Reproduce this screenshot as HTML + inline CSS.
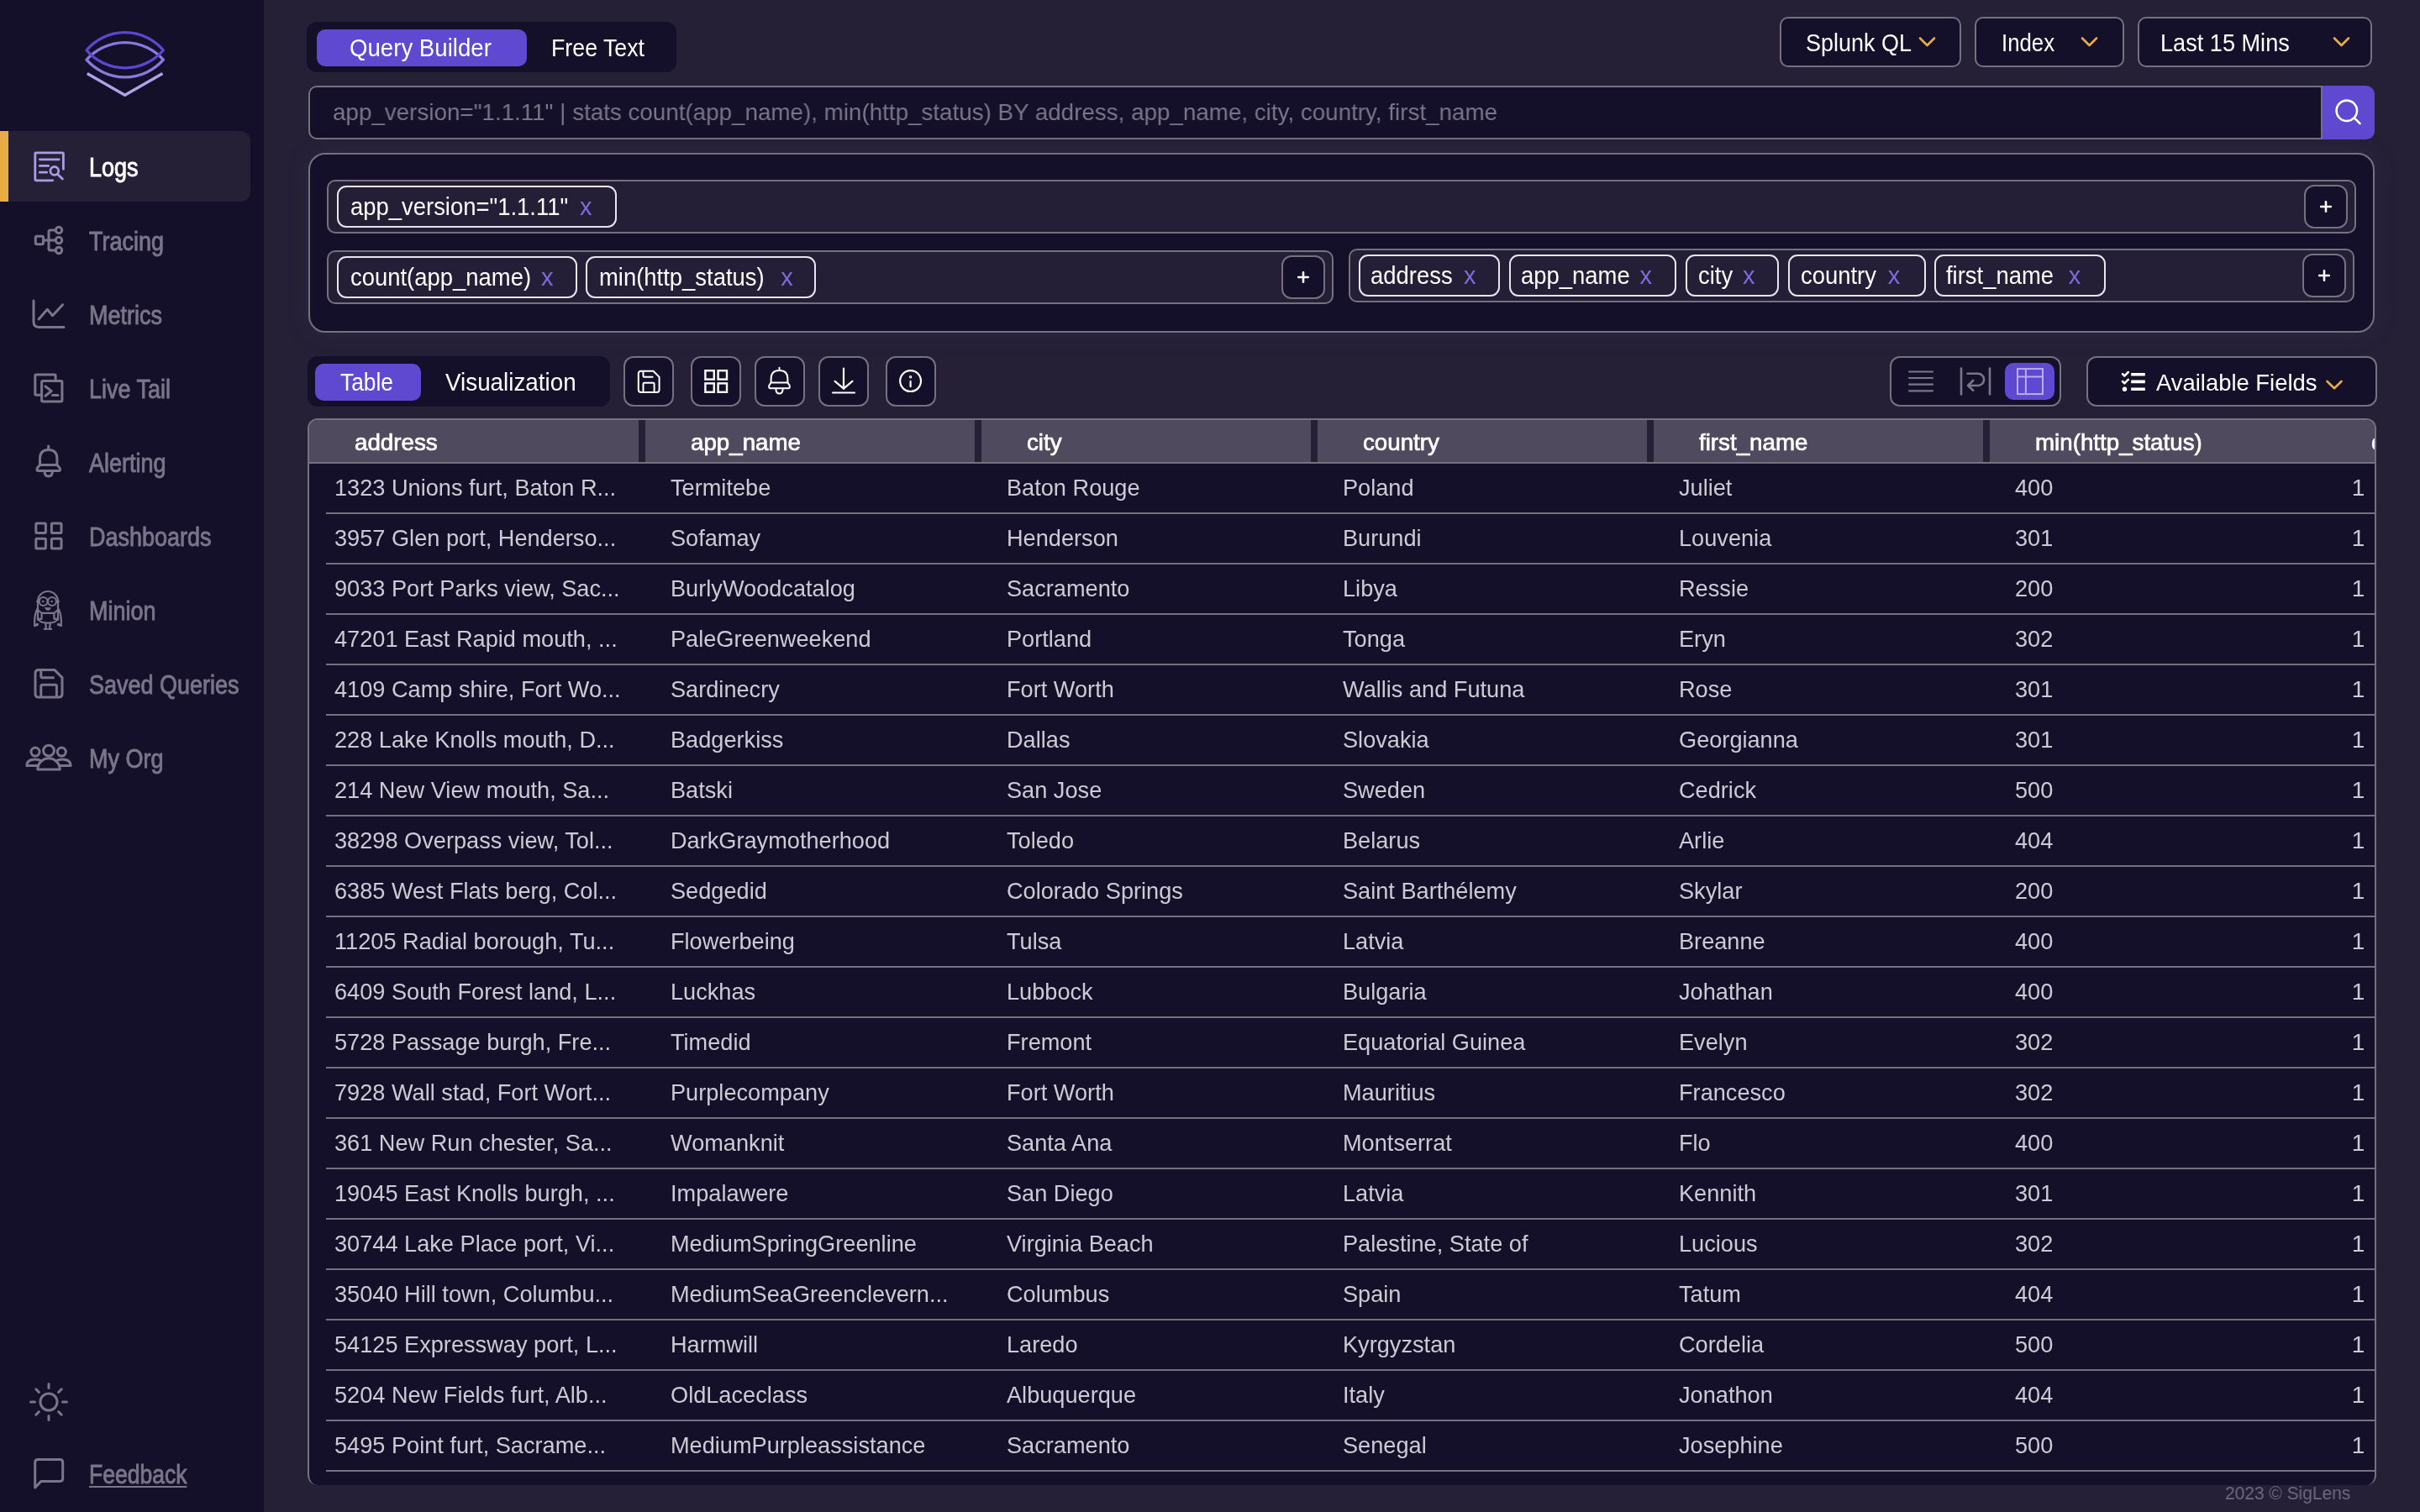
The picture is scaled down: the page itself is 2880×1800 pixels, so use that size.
<!DOCTYPE html>
<html><head><meta charset="utf-8"><style>
html,body{margin:0;padding:0;}
body{width:2880px;height:1800px;overflow:hidden;background:#252036;position:relative;font-family:"Liberation Sans",sans-serif;}
#w{position:absolute;left:0;top:0;width:2880px;height:1800px;will-change:transform;}
@media (max-width:2000px){body{width:1440px;height:900px;} #w{zoom:0.5;}}
.a{position:absolute;}
.t{position:absolute;white-space:nowrap;transform-origin:0 0;}
svg.a{overflow:visible;}
</style></head><body><div id="w">
<div class="a" style="left:0px;top:0px;width:314px;height:1800px;background:#15102a;"></div>
<svg class="a" style="left:90px;top:25px;width:120px;height:100px;" width="120" height="100" viewBox="90 25 120 100" stroke="#5d47d0" stroke-width="3.3" fill="none" stroke-linecap="round" stroke-linejoin="round"><path d="M103 71.2 A61 61 0 0 1 194.4 71.2 A61 61 0 0 1 103 71.2 Z" stroke="#8b78de"/><path d="M103 59.7 A60 60 0 0 1 194.4 59.7 A60 60 0 0 1 103 59.7 Z" stroke="#5d47d0"/><path d="M103.8 87.5 L148.6 113.3 L193.5 87.5" stroke="#b0a2e6" stroke-linecap="butt"/></svg>
<div class="a" style="left:0px;top:156px;width:298px;height:84px;background:#252036;border-radius:0 12px 12px 0;"></div>
<div class="a" style="left:0px;top:156px;width:10px;height:84px;background:#e9ab45;"></div>
<div class="t nav" style="left:105.9px;top:184.0px;font-size:31px;line-height:31px;color:#ffffff;transform:scaleX(0.8700);-webkit-text-stroke:0.9px #ffffff;">Logs</div>
<div class="t nav" style="left:105.9px;top:272.0px;font-size:31px;line-height:31px;color:#7a7589;transform:scaleX(0.8700);-webkit-text-stroke:0.9px #7a7589;">Tracing</div>
<div class="t nav" style="left:105.9px;top:360.0px;font-size:31px;line-height:31px;color:#7a7589;transform:scaleX(0.8700);-webkit-text-stroke:0.9px #7a7589;">Metrics</div>
<div class="t nav" style="left:105.9px;top:448.0px;font-size:31px;line-height:31px;color:#7a7589;transform:scaleX(0.8700);-webkit-text-stroke:0.9px #7a7589;">Live Tail</div>
<div class="t nav" style="left:105.9px;top:536.0px;font-size:31px;line-height:31px;color:#7a7589;transform:scaleX(0.8700);-webkit-text-stroke:0.9px #7a7589;">Alerting</div>
<div class="t nav" style="left:105.9px;top:624.0px;font-size:31px;line-height:31px;color:#7a7589;transform:scaleX(0.8700);-webkit-text-stroke:0.9px #7a7589;">Dashboards</div>
<div class="t nav" style="left:105.9px;top:712.0px;font-size:31px;line-height:31px;color:#7a7589;transform:scaleX(0.8700);-webkit-text-stroke:0.9px #7a7589;">Minion</div>
<div class="t nav" style="left:105.9px;top:800.0px;font-size:31px;line-height:31px;color:#7a7589;transform:scaleX(0.8700);-webkit-text-stroke:0.9px #7a7589;">Saved Queries</div>
<div class="t nav" style="left:105.9px;top:888.0px;font-size:31px;line-height:31px;color:#7a7589;transform:scaleX(0.8700);-webkit-text-stroke:0.9px #7a7589;">My Org</div>
<svg class="a" style="left:36px;top:176px;width:44px;height:44px;" width="44" height="44" viewBox="36 176 44 44" stroke="#a99ce2" stroke-width="2.8" fill="none" stroke-linecap="round" stroke-linejoin="round"><g transform="translate(0.8 0.8)"><path d="M61.9 214 H42 Q41 214 41 213 V182 Q41 181 42 181 H73.6 Q74.6 181 74.6 182 V200.5"/><path d="M46.5 189 H69.4 M46.5 196.6 H56.9 M46.5 204.4 H54.9"/><circle cx="64" cy="202.6" r="4.9"/><path d="M67.6 206.4 L73.6 212.2"/></g></svg>
<svg class="a" style="left:36px;top:264px;width:44px;height:44px;" width="44" height="44" viewBox="36 264 44 44" stroke="#7a7589" stroke-width="3" fill="none" stroke-linecap="round" stroke-linejoin="round"><rect x="42.3" y="281.2" width="9.2" height="9.6" rx="1.5"/><path d="M51.5 286 H58 M66.3 273.9 H60 Q58 273.9 58 275.9 V296 Q58 298 60 298 H66.3 M58 286 H66.3"/><circle cx="70" cy="273.9" r="3.7"/><circle cx="70" cy="286" r="3.7"/><circle cx="70" cy="298" r="3.7"/></svg>
<svg class="a" style="left:32px;top:350px;width:50px;height:46px;" width="50" height="46" viewBox="32 350 50 46" stroke="#7a7589" stroke-width="3" fill="none" stroke-linecap="round" stroke-linejoin="round"><path d="M40 358 V383 Q40 389.6 46.6 389.6 H76"/><path d="M46.1 379.9 L56.3 368.3 L62.6 375.7 L74.6 362.8"/></svg>
<svg class="a" style="left:36px;top:440px;width:44px;height:44px;" width="44" height="44" viewBox="36 440 44 44" stroke="#7a7589" stroke-width="3" fill="none" stroke-linecap="round" stroke-linejoin="round"><path d="M48.1 470.2 H43 Q41.8 470.2 41.8 469 V447.1 Q41.8 445.9 43 445.9 H64.9 Q66.1 445.9 66.1 447.1 V452"/><rect x="49.6" y="453.5" width="24.3" height="24.6" rx="1.5"/><path d="M54 460 L61.2 465.5 L54 471.2 M62.5 470.5 H69"/></svg>
<svg class="a" style="left:36px;top:526px;width:46px;height:46px;" width="46" height="46" viewBox="36 526 46 46" stroke="#7a7589" stroke-width="3" fill="none" stroke-linecap="round" stroke-linejoin="round"><path d="M57.7 531 V534.5 M47.5 553.5 V546 Q47.5 535.5 57.7 535.5 Q67.9 535.5 67.9 546 V553.5"/><path d="M47.5 553.5 L44.5 557 Q42.8 560.6 45.5 560.6 H70 Q72.6 560.6 71 557 L67.9 553.5 Z"/><path d="M53 561 Q53 567 57.7 567 Q62.4 567 62.4 561"/></svg>
<svg class="a" style="left:36px;top:616px;width:44px;height:44px;" width="44" height="44" viewBox="36 616 44 44" stroke="#7a7589" stroke-width="3" fill="none" stroke-linecap="round" stroke-linejoin="round"><rect x="42.8" y="622.9" width="11.6" height="11.6" rx="1"/><rect x="61.4" y="622.9" width="11.6" height="11.6" rx="1"/><rect x="42.8" y="641.3" width="11.6" height="11.6" rx="1"/><rect x="61.4" y="641.3" width="11.6" height="11.6" rx="1"/></svg>
<svg class="a" style="left:34px;top:698px;width:48px;height:56px;" width="48" height="56" viewBox="34 698 48 56" stroke="#7a7589" stroke-width="2.2" fill="none" stroke-linecap="round" stroke-linejoin="round"><path d="M45 738 V716 A12 12 0 0 1 69 716 V738"/><circle cx="51.6" cy="716" r="5"/><circle cx="62" cy="716" r="5"/><path d="M44 716 H46.6 M67 716 H70"/><path d="M53.6 723.6 H60.4 Q59.8 726.4 57 726.4 Q54.2 726.4 53.6 723.6 Z" fill="#7a7589" stroke-width="0.8"/><path d="M45.5 726.5 L49.6 729.8 H64.4 L68.5 726.5 M49.6 729.8 V736.8 H46.5 M64.4 729.8 V736.8 H67.5"/><path d="M45.2 736.5 Q47 741.6 57 741.6 Q67 741.6 68.8 736.5"/><path d="M44 725.5 Q40.6 733 41.2 744 M70 725.5 Q73.4 733 72.8 744"/><path d="M41.5 744.5 L44.5 743.5 M72.5 744.5 L69.5 743.5" stroke-width="3.2"/><path d="M54.2 742 L55 748.5 M59.8 742 L59 748.5 M52.8 748.8 H56 M58 748.8 H61.2"/><circle cx="51.2" cy="716" r="1.3" fill="#7a7589" stroke="none"/><circle cx="61.6" cy="716" r="1.3" fill="#7a7589" stroke="none"/></svg>
<svg class="a" style="left:36px;top:792px;width:44px;height:44px;" width="44" height="44" viewBox="36 792 44 44" stroke="#7a7589" stroke-width="3" fill="none" stroke-linecap="round" stroke-linejoin="round"><path d="M45 797.6 H65 L74 806.6 V826 Q74 830 70 830 H46 Q42 830 42 826 V801.6 Q42 797.6 46 797.6 Z"/><path d="M48.8 798 V805 Q48.8 806.8 50.6 806.8 H63.5 M48.8 829.5 V817 Q48.8 815.2 50.6 815.2 H65.6 Q67.4 815.2 67.4 817 V829.5"/></svg>
<svg class="a" style="left:26px;top:880px;width:64px;height:44px;" width="64" height="44" viewBox="26 880 64 44" stroke="#7a7589" stroke-width="3" fill="none" stroke-linecap="round" stroke-linejoin="round"><circle cx="58" cy="893.6" r="6.4"/><circle cx="42" cy="895.1" r="5"/><circle cx="73.3" cy="895.1" r="5"/><path d="M44.8 916 A13.2 13.2 0 0 1 71.2 916 Z"/><path d="M49.5 906 Q46 904 42 904 Q32 904 31.9 911.5 H44.8 M66.5 906 Q70 904 74 904 Q84 904 84.1 911.5 H71.2"/></svg>
<svg class="a" style="left:30px;top:1641px;width:56px;height:56px;" width="56" height="56" viewBox="30 1641 56 56" stroke="#7a7589" stroke-width="3" fill="none" stroke-linecap="round" stroke-linejoin="round"><circle cx="58" cy="1669" r="10"/><path d="M74.50 1669.00 L79.50 1669.00 M69.67 1680.67 L73.20 1684.20 M58.00 1685.50 L58.00 1690.50 M46.33 1680.67 L42.80 1684.20 M41.50 1669.00 L36.50 1669.00 M46.33 1657.33 L42.80 1653.80 M58.00 1652.50 L58.00 1647.50 M69.67 1657.33 L73.20 1653.80 "/></svg>
<svg class="a" style="left:36px;top:1732px;width:44px;height:44px;" width="44" height="44" viewBox="36 1732 44 44" stroke="#7a7589" stroke-width="3" fill="none" stroke-linecap="round" stroke-linejoin="round"><path d="M41.7 1771 V1741 Q41.7 1737.6 45 1737.6 H71.4 Q74.7 1737.6 74.7 1741 V1760 Q74.7 1763.4 71.4 1763.4 H49 Z"/></svg>
<div class="t nav" style="left:105.9px;top:1739.5px;font-size:31px;line-height:31px;color:#7a7589;transform:scaleX(0.8550);-webkit-text-stroke:0.9px #7a7589;text-decoration:underline;text-underline-offset:3px;text-decoration-thickness:2px;">Feedback</div>
<div class="a" style="left:365px;top:26px;width:440px;height:60px;background:#15102a;border-radius:12px;"></div>
<div class="a" style="left:377px;top:35px;width:250px;height:44px;background:#6049d1;border-radius:10px;"></div>
<div class="t " style="left:416.1px;top:43.0px;font-size:29px;line-height:29px;color:#fff;transform:scaleX(0.9522);">Query Builder</div>
<div class="t " style="left:656.2px;top:43.0px;font-size:29px;line-height:29px;color:#fff;transform:scaleX(0.9225);">Free Text</div>
<div class="a" style="left:2118px;top:20px;width:216px;height:60px;background:#15102a;border:2px solid #76717f;border-radius:10px;box-sizing:border-box;"></div>
<div class="t " style="left:2148.5px;top:37.3px;font-size:29px;line-height:29px;color:#fff;transform:scaleX(0.9296);">Splunk QL</div>
<svg class="a" style="left:2281.5px;top:42px;width:24px;height:16px;" width="24" height="16" viewBox="2281.5 42 24 16" stroke="#e9ab45" stroke-width="2.6" fill="none" stroke-linecap="round" stroke-linejoin="round"><path d="M2284.5 45.5 L2293.0 54 L2301.5 45.5"/></svg>
<div class="a" style="left:2350px;top:20px;width:178px;height:60px;background:#15102a;border:2px solid #76717f;border-radius:10px;box-sizing:border-box;"></div>
<div class="t " style="left:2381.5px;top:37.3px;font-size:29px;line-height:29px;color:#fff;transform:scaleX(0.8887);">Index</div>
<svg class="a" style="left:2475.4px;top:42px;width:24px;height:16px;" width="24" height="16" viewBox="2475.4 42 24 16" stroke="#e9ab45" stroke-width="2.6" fill="none" stroke-linecap="round" stroke-linejoin="round"><path d="M2478.4 45.5 L2486.9 54 L2495.4 45.5"/></svg>
<div class="a" style="left:2544px;top:20px;width:279px;height:60px;background:#15102a;border:2px solid #76717f;border-radius:10px;box-sizing:border-box;"></div>
<div class="t " style="left:2570.7px;top:37.3px;font-size:29px;line-height:29px;color:#fff;transform:scaleX(0.9354);">Last 15 Mins</div>
<svg class="a" style="left:2775px;top:42px;width:24px;height:16px;" width="24" height="16" viewBox="2775 42 24 16" stroke="#e9ab45" stroke-width="2.6" fill="none" stroke-linecap="round" stroke-linejoin="round"><path d="M2778 45.5 L2786.5 54 L2795 45.5"/></svg>
<div class="a" style="left:367px;top:102px;width:2397px;height:64px;background:#15102a;border:2px solid #76717f;border-radius:10px 0 0 10px;box-sizing:border-box;"></div>
<div class="a" style="left:2764px;top:102px;width:62px;height:64px;background:#6049d1;border-radius:0 10px 10px 0;"></div>
<svg class="a" style="left:2770px;top:108px;width:50px;height:50px;" width="50" height="50" viewBox="2770 108 50 50" stroke="#fff" stroke-width="2.6" fill="none" stroke-linecap="round" stroke-linejoin="round"><circle cx="2792.8" cy="131.8" r="12.2"/><path d="M2802 140.6 L2808.6 147.2"/></svg>
<div class="t " style="left:396.0px;top:120.0px;font-size:28px;line-height:28px;color:#7a7589;transform:scaleX(0.9921);">app_version="1.1.11" | stats count(app_name), min(http_status) BY address, app_name, city, country, first_name</div>
<div class="a" style="left:367px;top:182px;width:2459px;height:214px;background:#15102a;border:2px solid #76717f;border-radius:20px;box-sizing:border-box;box-shadow:0 0 24px rgba(60,50,90,0.35);"></div>
<div class="a" style="left:389px;top:214px;width:2415px;height:64px;background:#241f37;border:2px solid #76717f;border-radius:10px;box-sizing:border-box;"></div>
<div class="a" style="left:389px;top:298px;width:1198px;height:64px;background:#241f37;border:2px solid #76717f;border-radius:10px;box-sizing:border-box;"></div>
<div class="a" style="left:1605px;top:296px;width:1197px;height:64px;background:#241f37;border:2px solid #76717f;border-radius:10px;box-sizing:border-box;"></div>
<div class="a" style="left:401px;top:221px;width:333px;height:50px;background:#241f37;border:2px solid #e8e5ec;border-radius:11px;box-sizing:border-box;"></div>
<div class="t " style="left:416.5px;top:231.5px;font-size:29px;line-height:29px;color:#fff;transform:scaleX(0.9460);">app_version="1.1.11"</div>
<div class="t " style="left:690.0px;top:231.5px;font-size:29px;line-height:29px;color:#7d6bdc;">x</div>
<div class="a" style="left:401px;top:305px;width:286px;height:50px;background:#241f37;border:2px solid #e8e5ec;border-radius:11px;box-sizing:border-box;"></div>
<div class="t " style="left:416.9px;top:315.5px;font-size:29px;line-height:29px;color:#fff;transform:scaleX(0.9460);">count(app_name)</div>
<div class="t " style="left:644.0px;top:315.5px;font-size:29px;line-height:29px;color:#7d6bdc;">x</div>
<div class="a" style="left:697px;top:305px;width:274px;height:50px;background:#241f37;border:2px solid #e8e5ec;border-radius:11px;box-sizing:border-box;"></div>
<div class="t " style="left:712.5px;top:315.5px;font-size:29px;line-height:29px;color:#fff;transform:scaleX(0.9460);">min(http_status)</div>
<div class="t " style="left:929.2px;top:315.5px;font-size:29px;line-height:29px;color:#7d6bdc;">x</div>
<div class="a" style="left:1617px;top:303px;width:168px;height:50px;background:#241f37;border:2px solid #e8e5ec;border-radius:11px;box-sizing:border-box;"></div>
<div class="t " style="left:1631.0px;top:314.0px;font-size:29px;line-height:29px;color:#fff;transform:scaleX(0.9460);">address</div>
<div class="t " style="left:1742.0px;top:314.0px;font-size:29px;line-height:29px;color:#7d6bdc;">x</div>
<div class="a" style="left:1796px;top:303px;width:199px;height:50px;background:#241f37;border:2px solid #e8e5ec;border-radius:11px;box-sizing:border-box;"></div>
<div class="t " style="left:1810.0px;top:314.0px;font-size:29px;line-height:29px;color:#fff;transform:scaleX(0.9460);">app_name</div>
<div class="t " style="left:1951.4px;top:314.0px;font-size:29px;line-height:29px;color:#7d6bdc;">x</div>
<div class="a" style="left:2006px;top:303px;width:111px;height:50px;background:#241f37;border:2px solid #e8e5ec;border-radius:11px;box-sizing:border-box;"></div>
<div class="t " style="left:2020.5px;top:314.0px;font-size:29px;line-height:29px;color:#fff;transform:scaleX(0.9460);">city</div>
<div class="t " style="left:2074.0px;top:314.0px;font-size:29px;line-height:29px;color:#7d6bdc;">x</div>
<div class="a" style="left:2128px;top:303px;width:164px;height:50px;background:#241f37;border:2px solid #e8e5ec;border-radius:11px;box-sizing:border-box;"></div>
<div class="t " style="left:2142.5px;top:314.0px;font-size:29px;line-height:29px;color:#fff;transform:scaleX(0.9460);">country</div>
<div class="t " style="left:2246.7px;top:314.0px;font-size:29px;line-height:29px;color:#7d6bdc;">x</div>
<div class="a" style="left:2302px;top:303px;width:204px;height:50px;background:#241f37;border:2px solid #e8e5ec;border-radius:11px;box-sizing:border-box;"></div>
<div class="t " style="left:2316.4px;top:314.0px;font-size:29px;line-height:29px;color:#fff;transform:scaleX(0.9460);">first_name</div>
<div class="t " style="left:2461.7px;top:314.0px;font-size:29px;line-height:29px;color:#7d6bdc;">x</div>
<div class="a" style="left:2742px;top:220px;width:52px;height:52px;background:#15102a;border:2px solid #76717f;border-radius:12px;box-sizing:border-box;"></div>
<svg class="a" style="left:2758px;top:236px;width:20px;height:20px;" width="20" height="20" viewBox="2758 236 20 20" stroke="#fff" stroke-width="2.6" fill="none" stroke-linecap="round" stroke-linejoin="round"><path d="M2768 240.2 V251.8 M2762.2 246 H2773.8"/></svg>
<div class="a" style="left:1525px;top:304px;width:52px;height:52px;background:#15102a;border:2px solid #76717f;border-radius:12px;box-sizing:border-box;"></div>
<svg class="a" style="left:1541px;top:320px;width:20px;height:20px;" width="20" height="20" viewBox="1541 320 20 20" stroke="#fff" stroke-width="2.6" fill="none" stroke-linecap="round" stroke-linejoin="round"><path d="M1551 324.2 V335.8 M1545.2 330 H1556.8"/></svg>
<div class="a" style="left:2740px;top:302px;width:52px;height:52px;background:#15102a;border:2px solid #76717f;border-radius:12px;box-sizing:border-box;"></div>
<svg class="a" style="left:2756px;top:318px;width:20px;height:20px;" width="20" height="20" viewBox="2756 318 20 20" stroke="#fff" stroke-width="2.6" fill="none" stroke-linecap="round" stroke-linejoin="round"><path d="M2766 322.2 V333.8 M2760.2 328 H2771.8"/></svg>
<div class="a" style="left:366px;top:424px;width:360px;height:60px;background:#15102a;border-radius:12px;"></div>
<div class="a" style="left:375px;top:433px;width:126px;height:44px;background:#6049d1;border-radius:10px;"></div>
<div class="t " style="left:404.5px;top:441.2px;font-size:29px;line-height:29px;color:#fff;transform:scaleX(0.9087);">Table</div>
<div class="t " style="left:530.0px;top:441.2px;font-size:29px;line-height:29px;color:#fff;transform:scaleX(0.9593);">Visualization</div>
<div class="a" style="left:742px;top:424px;width:60px;height:60px;background:#15102a;border:2px solid #76717f;border-radius:12px;box-sizing:border-box;"></div>
<div class="a" style="left:822px;top:424px;width:60px;height:60px;background:#15102a;border:2px solid #76717f;border-radius:12px;box-sizing:border-box;"></div>
<div class="a" style="left:898px;top:424px;width:60px;height:60px;background:#15102a;border:2px solid #76717f;border-radius:12px;box-sizing:border-box;"></div>
<div class="a" style="left:974px;top:424px;width:60px;height:60px;background:#15102a;border:2px solid #76717f;border-radius:12px;box-sizing:border-box;"></div>
<div class="a" style="left:1054px;top:424px;width:60px;height:60px;background:#15102a;border:2px solid #76717f;border-radius:12px;box-sizing:border-box;"></div>
<svg class="a" style="left:752px;top:434px;width:40px;height:40px;" width="40" height="40" viewBox="752 434 40 40" stroke="#ffffff" stroke-width="2" fill="none" stroke-linecap="round" stroke-linejoin="round"><path d="M762 441.8 H777.5 L784.6 448.9 V463.9 Q784.6 467 781.5 467 H763 Q759.8 467 759.8 463.9 V445 Q759.8 441.8 763 441.8 Z"/><path d="M765.5 442 V447.5 Q765.5 448.7 766.7 448.7 H776.6 M765.5 466.5 V457 Q765.5 455.8 766.7 455.8 H777.4 Q778.6 455.8 778.6 457 V466.5"/></svg>
<svg class="a" style="left:832px;top:434px;width:40px;height:40px;stroke-linejoin:miter" width="40" height="40" viewBox="832 434 40 40" stroke="#ffffff" stroke-width="2.4" fill="none" stroke-linecap="round" stroke-linejoin="round"><rect x="839.4" y="441.2" width="10.4" height="10.4"/><rect x="854.6" y="441.2" width="10.4" height="10.4"/><rect x="839.4" y="456.4" width="10.4" height="10.4"/><rect x="854.6" y="456.4" width="10.4" height="10.4"/></svg>
<svg class="a" style="left:906px;top:432px;width:44px;height:44px;" width="44" height="44" viewBox="906 432 44 44" stroke="#ffffff" stroke-width="2" fill="none" stroke-linecap="round" stroke-linejoin="round"><path d="M927.5 437.8 V440.8 M917.6 455.5 V451 Q917.6 441 927.5 441 Q937.4 441 937.4 451 V455.5"/><path d="M917.6 455.5 L915.5 458.5 Q914.3 462.3 917 462.3 H938 Q940.7 462.3 939.5 458.5 L937.4 455.5 Z"/><path d="M923.4 462.8 Q923.4 468.6 927.5 468.6 Q931.6 468.6 931.6 462.8"/></svg>
<svg class="a" style="left:984px;top:430px;width:44px;height:44px;" width="44" height="44" viewBox="984 430 44 44" stroke="#ffffff" stroke-width="2.2" fill="none" stroke-linecap="round" stroke-linejoin="round"><path d="M1004 438.6 V463 M993.6 453.8 L1004 462.6 L1014.4 453.8 M991 467.5 H1017"/></svg>
<svg class="a" style="left:1064px;top:434px;width:40px;height:40px;" width="40" height="40" viewBox="1064 434 40 40" stroke="#ffffff" stroke-width="2.2" fill="none" stroke-linecap="round" stroke-linejoin="round"><circle cx="1083.6" cy="453.6" r="12.4"/><path d="M1083.6 454 V460.2"/><circle cx="1083.6" cy="448.8" r="0.6"/></svg>
<div class="a" style="left:2249px;top:424px;width:204px;height:60px;background:#15102a;border:2px solid #76717f;border-radius:12px;box-sizing:border-box;"></div>
<div class="a" style="left:2386px;top:432px;width:59px;height:44px;background:#6049d1;border-radius:10px;"></div>
<svg class="a" style="left:2266px;top:436px;width:40px;height:36px;" width="40" height="36" viewBox="2266 436 40 36" stroke="#7a7589" stroke-width="2.2" fill="none" stroke-linecap="round" stroke-linejoin="round"><path d="M2272 442.5 H2300 M2272 450 H2300 M2272 457.7 H2300 M2272 465.3 H2300"/></svg>
<svg class="a" style="left:2326px;top:434px;width:50px;height:40px;" width="50" height="40" viewBox="2326 434 50 40" stroke="#7a7589" stroke-width="2.6" fill="none" stroke-linecap="round" stroke-linejoin="round"><path d="M2334 438.5 V469.5 M2368 438.5 V469.5"/><path d="M2341.5 444.8 H2354 A7.1 7.1 0 0 1 2354 459 H2342 M2348.2 453 L2342 459 L2348.2 464.8"/></svg>
<svg class="a" style="left:2396px;top:434px;width:40px;height:40px;stroke-linejoin:miter" width="40" height="40" viewBox="2396 434 40 40" stroke="#b9aee9" stroke-width="2" fill="none" stroke-linecap="round" stroke-linejoin="round"><rect x="2401" y="439.1" width="30" height="30"/><path d="M2401 448.6 H2431 M2410.9 439 V469"/></svg>
<div class="a" style="left:2483px;top:424px;width:346px;height:60px;background:#15102a;border:2px solid #76717f;border-radius:12px;box-sizing:border-box;"></div>
<svg class="a" style="left:2520px;top:438px;width:40px;height:32px;" width="40" height="32" viewBox="2520 438 40 32" stroke="#fff" stroke-width="2" fill="none" stroke-linecap="round" stroke-linejoin="round"><path d="M2526 445.2 L2528.3 447.5 L2532.8 443 M2526 454 L2528.3 456.3 L2532.8 451.8" stroke-width="2.5"/><circle cx="2528.5" cy="463.3" r="1.3" stroke-width="2.8"/><path d="M2536.2 445.8 H2552.8 M2536.2 454.4 H2552.8 M2536.2 463.2 H2552.8" stroke-width="3.6" stroke-linecap="butt"/></svg>
<div class="t " style="left:2565.9px;top:441.6px;font-size:28px;line-height:28px;color:#fff;transform:scaleX(0.9791);">Available Fields</div>
<svg class="a" style="left:2764px;top:448px;width:28px;height:20px;" width="28" height="20" viewBox="2764 448 28 20" stroke="#e9ab45" stroke-width="2.6" fill="none" stroke-linecap="round" stroke-linejoin="round"><path d="M2769.5 454 L2778 462.3 L2786.5 454"/></svg>
<div class="a" style="left:366px;top:498px;width:2462px;height:1270px;box-sizing:border-box;border:2px solid #76717f;border-bottom:none;border-radius:12px;background:#15102a;overflow:hidden">
<div class="a" style="left:0;top:0;width:2458px;height:50px;background:#4f4a5e;border-bottom:2px solid #76717f;"></div>
<div class="a" style="left:392px;top:0;width:8px;height:50px;background:#252036"></div>
<div class="a" style="left:792px;top:0;width:8px;height:50px;background:#252036"></div>
<div class="a" style="left:1192px;top:0;width:8px;height:50px;background:#252036"></div>
<div class="a" style="left:1592px;top:0;width:8px;height:50px;background:#252036"></div>
<div class="a" style="left:1992px;top:0;width:8px;height:50px;background:#252036"></div>
<div class="t" style="left:54.4px;top:13.0px;font-size:28px;line-height:28px;color:#fff;transform:scaleX(0.9900);-webkit-text-stroke:0.7px #fff;">address</div>
<div class="t" style="left:454.4px;top:13.0px;font-size:28px;line-height:28px;color:#fff;transform:scaleX(0.9900);-webkit-text-stroke:0.7px #fff;">app_name</div>
<div class="t" style="left:854.4px;top:13.0px;font-size:28px;line-height:28px;color:#fff;transform:scaleX(0.9900);-webkit-text-stroke:0.7px #fff;">city</div>
<div class="t" style="left:1254.4px;top:13.0px;font-size:28px;line-height:28px;color:#fff;transform:scaleX(0.9900);-webkit-text-stroke:0.7px #fff;">country</div>
<div class="t" style="left:1654.4px;top:13.0px;font-size:28px;line-height:28px;color:#fff;transform:scaleX(0.9900);-webkit-text-stroke:0.7px #fff;">first_name</div>
<div class="t" style="left:2054.4px;top:13.0px;font-size:28px;line-height:28px;color:#fff;transform:scaleX(0.9900);-webkit-text-stroke:0.7px #fff;">min(http_status)</div>
<div class="t" style="left:2454.4px;top:13.0px;font-size:28px;line-height:28px;color:#fff;transform:scaleX(0.9900);-webkit-text-stroke:0.7px #fff;">count(app_name)</div>
<div class="a" style="left:20px;top:110.0px;width:2438px;height:2px;background:#76717f"></div>
<div class="t" style="left:29.8px;top:67.0px;font-size:28px;line-height:28px;color:#cdcad4;transform:scaleX(0.9700);">1323 Unions furt, Baton R...</div>
<div class="t" style="left:429.8px;top:67.0px;font-size:28px;line-height:28px;color:#cdcad4;transform:scaleX(0.9700);">Termitebe</div>
<div class="t" style="left:829.8px;top:67.0px;font-size:28px;line-height:28px;color:#cdcad4;transform:scaleX(0.9700);">Baton Rouge</div>
<div class="t" style="left:1229.8px;top:67.0px;font-size:28px;line-height:28px;color:#cdcad4;transform:scaleX(0.9700);">Poland</div>
<div class="t" style="left:1629.8px;top:67.0px;font-size:28px;line-height:28px;color:#cdcad4;transform:scaleX(0.9700);">Juliet</div>
<div class="t" style="left:2029.8px;top:67.0px;font-size:28px;line-height:28px;color:#cdcad4;transform:scaleX(0.9700);">400</div>
<div class="t" style="left:2430.7px;top:67.0px;font-size:28px;line-height:28px;color:#cdcad4;">1</div>
<div class="a" style="left:20px;top:170.0px;width:2438px;height:2px;background:#76717f"></div>
<div class="t" style="left:29.8px;top:127.0px;font-size:28px;line-height:28px;color:#cdcad4;transform:scaleX(0.9700);">3957 Glen port, Henderso...</div>
<div class="t" style="left:429.8px;top:127.0px;font-size:28px;line-height:28px;color:#cdcad4;transform:scaleX(0.9700);">Sofamay</div>
<div class="t" style="left:829.8px;top:127.0px;font-size:28px;line-height:28px;color:#cdcad4;transform:scaleX(0.9700);">Henderson</div>
<div class="t" style="left:1229.8px;top:127.0px;font-size:28px;line-height:28px;color:#cdcad4;transform:scaleX(0.9700);">Burundi</div>
<div class="t" style="left:1629.8px;top:127.0px;font-size:28px;line-height:28px;color:#cdcad4;transform:scaleX(0.9700);">Louvenia</div>
<div class="t" style="left:2029.8px;top:127.0px;font-size:28px;line-height:28px;color:#cdcad4;transform:scaleX(0.9700);">301</div>
<div class="t" style="left:2430.7px;top:127.0px;font-size:28px;line-height:28px;color:#cdcad4;">1</div>
<div class="a" style="left:20px;top:230.0px;width:2438px;height:2px;background:#76717f"></div>
<div class="t" style="left:29.8px;top:187.0px;font-size:28px;line-height:28px;color:#cdcad4;transform:scaleX(0.9700);">9033 Port Parks view, Sac...</div>
<div class="t" style="left:429.8px;top:187.0px;font-size:28px;line-height:28px;color:#cdcad4;transform:scaleX(0.9700);">BurlyWoodcatalog</div>
<div class="t" style="left:829.8px;top:187.0px;font-size:28px;line-height:28px;color:#cdcad4;transform:scaleX(0.9700);">Sacramento</div>
<div class="t" style="left:1229.8px;top:187.0px;font-size:28px;line-height:28px;color:#cdcad4;transform:scaleX(0.9700);">Libya</div>
<div class="t" style="left:1629.8px;top:187.0px;font-size:28px;line-height:28px;color:#cdcad4;transform:scaleX(0.9700);">Ressie</div>
<div class="t" style="left:2029.8px;top:187.0px;font-size:28px;line-height:28px;color:#cdcad4;transform:scaleX(0.9700);">200</div>
<div class="t" style="left:2430.7px;top:187.0px;font-size:28px;line-height:28px;color:#cdcad4;">1</div>
<div class="a" style="left:20px;top:290.0px;width:2438px;height:2px;background:#76717f"></div>
<div class="t" style="left:29.8px;top:247.0px;font-size:28px;line-height:28px;color:#cdcad4;transform:scaleX(0.9700);">47201 East Rapid mouth, ...</div>
<div class="t" style="left:429.8px;top:247.0px;font-size:28px;line-height:28px;color:#cdcad4;transform:scaleX(0.9700);">PaleGreenweekend</div>
<div class="t" style="left:829.8px;top:247.0px;font-size:28px;line-height:28px;color:#cdcad4;transform:scaleX(0.9700);">Portland</div>
<div class="t" style="left:1229.8px;top:247.0px;font-size:28px;line-height:28px;color:#cdcad4;transform:scaleX(0.9700);">Tonga</div>
<div class="t" style="left:1629.8px;top:247.0px;font-size:28px;line-height:28px;color:#cdcad4;transform:scaleX(0.9700);">Eryn</div>
<div class="t" style="left:2029.8px;top:247.0px;font-size:28px;line-height:28px;color:#cdcad4;transform:scaleX(0.9700);">302</div>
<div class="t" style="left:2430.7px;top:247.0px;font-size:28px;line-height:28px;color:#cdcad4;">1</div>
<div class="a" style="left:20px;top:350.0px;width:2438px;height:2px;background:#76717f"></div>
<div class="t" style="left:29.8px;top:307.0px;font-size:28px;line-height:28px;color:#cdcad4;transform:scaleX(0.9700);">4109 Camp shire, Fort Wo...</div>
<div class="t" style="left:429.8px;top:307.0px;font-size:28px;line-height:28px;color:#cdcad4;transform:scaleX(0.9700);">Sardinecry</div>
<div class="t" style="left:829.8px;top:307.0px;font-size:28px;line-height:28px;color:#cdcad4;transform:scaleX(0.9700);">Fort Worth</div>
<div class="t" style="left:1229.8px;top:307.0px;font-size:28px;line-height:28px;color:#cdcad4;transform:scaleX(0.9700);">Wallis and Futuna</div>
<div class="t" style="left:1629.8px;top:307.0px;font-size:28px;line-height:28px;color:#cdcad4;transform:scaleX(0.9700);">Rose</div>
<div class="t" style="left:2029.8px;top:307.0px;font-size:28px;line-height:28px;color:#cdcad4;transform:scaleX(0.9700);">301</div>
<div class="t" style="left:2430.7px;top:307.0px;font-size:28px;line-height:28px;color:#cdcad4;">1</div>
<div class="a" style="left:20px;top:410.0px;width:2438px;height:2px;background:#76717f"></div>
<div class="t" style="left:29.8px;top:367.0px;font-size:28px;line-height:28px;color:#cdcad4;transform:scaleX(0.9700);">228 Lake Knolls mouth, D...</div>
<div class="t" style="left:429.8px;top:367.0px;font-size:28px;line-height:28px;color:#cdcad4;transform:scaleX(0.9700);">Badgerkiss</div>
<div class="t" style="left:829.8px;top:367.0px;font-size:28px;line-height:28px;color:#cdcad4;transform:scaleX(0.9700);">Dallas</div>
<div class="t" style="left:1229.8px;top:367.0px;font-size:28px;line-height:28px;color:#cdcad4;transform:scaleX(0.9700);">Slovakia</div>
<div class="t" style="left:1629.8px;top:367.0px;font-size:28px;line-height:28px;color:#cdcad4;transform:scaleX(0.9700);">Georgianna</div>
<div class="t" style="left:2029.8px;top:367.0px;font-size:28px;line-height:28px;color:#cdcad4;transform:scaleX(0.9700);">301</div>
<div class="t" style="left:2430.7px;top:367.0px;font-size:28px;line-height:28px;color:#cdcad4;">1</div>
<div class="a" style="left:20px;top:470.0px;width:2438px;height:2px;background:#76717f"></div>
<div class="t" style="left:29.8px;top:427.0px;font-size:28px;line-height:28px;color:#cdcad4;transform:scaleX(0.9700);">214 New View mouth, Sa...</div>
<div class="t" style="left:429.8px;top:427.0px;font-size:28px;line-height:28px;color:#cdcad4;transform:scaleX(0.9700);">Batski</div>
<div class="t" style="left:829.8px;top:427.0px;font-size:28px;line-height:28px;color:#cdcad4;transform:scaleX(0.9700);">San Jose</div>
<div class="t" style="left:1229.8px;top:427.0px;font-size:28px;line-height:28px;color:#cdcad4;transform:scaleX(0.9700);">Sweden</div>
<div class="t" style="left:1629.8px;top:427.0px;font-size:28px;line-height:28px;color:#cdcad4;transform:scaleX(0.9700);">Cedrick</div>
<div class="t" style="left:2029.8px;top:427.0px;font-size:28px;line-height:28px;color:#cdcad4;transform:scaleX(0.9700);">500</div>
<div class="t" style="left:2430.7px;top:427.0px;font-size:28px;line-height:28px;color:#cdcad4;">1</div>
<div class="a" style="left:20px;top:530.0px;width:2438px;height:2px;background:#76717f"></div>
<div class="t" style="left:29.8px;top:487.0px;font-size:28px;line-height:28px;color:#cdcad4;transform:scaleX(0.9700);">38298 Overpass view, Tol...</div>
<div class="t" style="left:429.8px;top:487.0px;font-size:28px;line-height:28px;color:#cdcad4;transform:scaleX(0.9700);">DarkGraymotherhood</div>
<div class="t" style="left:829.8px;top:487.0px;font-size:28px;line-height:28px;color:#cdcad4;transform:scaleX(0.9700);">Toledo</div>
<div class="t" style="left:1229.8px;top:487.0px;font-size:28px;line-height:28px;color:#cdcad4;transform:scaleX(0.9700);">Belarus</div>
<div class="t" style="left:1629.8px;top:487.0px;font-size:28px;line-height:28px;color:#cdcad4;transform:scaleX(0.9700);">Arlie</div>
<div class="t" style="left:2029.8px;top:487.0px;font-size:28px;line-height:28px;color:#cdcad4;transform:scaleX(0.9700);">404</div>
<div class="t" style="left:2430.7px;top:487.0px;font-size:28px;line-height:28px;color:#cdcad4;">1</div>
<div class="a" style="left:20px;top:590.0px;width:2438px;height:2px;background:#76717f"></div>
<div class="t" style="left:29.8px;top:547.0px;font-size:28px;line-height:28px;color:#cdcad4;transform:scaleX(0.9700);">6385 West Flats berg, Col...</div>
<div class="t" style="left:429.8px;top:547.0px;font-size:28px;line-height:28px;color:#cdcad4;transform:scaleX(0.9700);">Sedgedid</div>
<div class="t" style="left:829.8px;top:547.0px;font-size:28px;line-height:28px;color:#cdcad4;transform:scaleX(0.9700);">Colorado Springs</div>
<div class="t" style="left:1229.8px;top:547.0px;font-size:28px;line-height:28px;color:#cdcad4;transform:scaleX(0.9700);">Saint Barthélemy</div>
<div class="t" style="left:1629.8px;top:547.0px;font-size:28px;line-height:28px;color:#cdcad4;transform:scaleX(0.9700);">Skylar</div>
<div class="t" style="left:2029.8px;top:547.0px;font-size:28px;line-height:28px;color:#cdcad4;transform:scaleX(0.9700);">200</div>
<div class="t" style="left:2430.7px;top:547.0px;font-size:28px;line-height:28px;color:#cdcad4;">1</div>
<div class="a" style="left:20px;top:650.0px;width:2438px;height:2px;background:#76717f"></div>
<div class="t" style="left:29.8px;top:607.0px;font-size:28px;line-height:28px;color:#cdcad4;transform:scaleX(0.9700);">11205 Radial borough, Tu...</div>
<div class="t" style="left:429.8px;top:607.0px;font-size:28px;line-height:28px;color:#cdcad4;transform:scaleX(0.9700);">Flowerbeing</div>
<div class="t" style="left:829.8px;top:607.0px;font-size:28px;line-height:28px;color:#cdcad4;transform:scaleX(0.9700);">Tulsa</div>
<div class="t" style="left:1229.8px;top:607.0px;font-size:28px;line-height:28px;color:#cdcad4;transform:scaleX(0.9700);">Latvia</div>
<div class="t" style="left:1629.8px;top:607.0px;font-size:28px;line-height:28px;color:#cdcad4;transform:scaleX(0.9700);">Breanne</div>
<div class="t" style="left:2029.8px;top:607.0px;font-size:28px;line-height:28px;color:#cdcad4;transform:scaleX(0.9700);">400</div>
<div class="t" style="left:2430.7px;top:607.0px;font-size:28px;line-height:28px;color:#cdcad4;">1</div>
<div class="a" style="left:20px;top:710.0px;width:2438px;height:2px;background:#76717f"></div>
<div class="t" style="left:29.8px;top:667.0px;font-size:28px;line-height:28px;color:#cdcad4;transform:scaleX(0.9700);">6409 South Forest land, L...</div>
<div class="t" style="left:429.8px;top:667.0px;font-size:28px;line-height:28px;color:#cdcad4;transform:scaleX(0.9700);">Luckhas</div>
<div class="t" style="left:829.8px;top:667.0px;font-size:28px;line-height:28px;color:#cdcad4;transform:scaleX(0.9700);">Lubbock</div>
<div class="t" style="left:1229.8px;top:667.0px;font-size:28px;line-height:28px;color:#cdcad4;transform:scaleX(0.9700);">Bulgaria</div>
<div class="t" style="left:1629.8px;top:667.0px;font-size:28px;line-height:28px;color:#cdcad4;transform:scaleX(0.9700);">Johathan</div>
<div class="t" style="left:2029.8px;top:667.0px;font-size:28px;line-height:28px;color:#cdcad4;transform:scaleX(0.9700);">400</div>
<div class="t" style="left:2430.7px;top:667.0px;font-size:28px;line-height:28px;color:#cdcad4;">1</div>
<div class="a" style="left:20px;top:770.0px;width:2438px;height:2px;background:#76717f"></div>
<div class="t" style="left:29.8px;top:727.0px;font-size:28px;line-height:28px;color:#cdcad4;transform:scaleX(0.9700);">5728 Passage burgh, Fre...</div>
<div class="t" style="left:429.8px;top:727.0px;font-size:28px;line-height:28px;color:#cdcad4;transform:scaleX(0.9700);">Timedid</div>
<div class="t" style="left:829.8px;top:727.0px;font-size:28px;line-height:28px;color:#cdcad4;transform:scaleX(0.9700);">Fremont</div>
<div class="t" style="left:1229.8px;top:727.0px;font-size:28px;line-height:28px;color:#cdcad4;transform:scaleX(0.9700);">Equatorial Guinea</div>
<div class="t" style="left:1629.8px;top:727.0px;font-size:28px;line-height:28px;color:#cdcad4;transform:scaleX(0.9700);">Evelyn</div>
<div class="t" style="left:2029.8px;top:727.0px;font-size:28px;line-height:28px;color:#cdcad4;transform:scaleX(0.9700);">302</div>
<div class="t" style="left:2430.7px;top:727.0px;font-size:28px;line-height:28px;color:#cdcad4;">1</div>
<div class="a" style="left:20px;top:830.0px;width:2438px;height:2px;background:#76717f"></div>
<div class="t" style="left:29.8px;top:787.0px;font-size:28px;line-height:28px;color:#cdcad4;transform:scaleX(0.9700);">7928 Wall stad, Fort Wort...</div>
<div class="t" style="left:429.8px;top:787.0px;font-size:28px;line-height:28px;color:#cdcad4;transform:scaleX(0.9700);">Purplecompany</div>
<div class="t" style="left:829.8px;top:787.0px;font-size:28px;line-height:28px;color:#cdcad4;transform:scaleX(0.9700);">Fort Worth</div>
<div class="t" style="left:1229.8px;top:787.0px;font-size:28px;line-height:28px;color:#cdcad4;transform:scaleX(0.9700);">Mauritius</div>
<div class="t" style="left:1629.8px;top:787.0px;font-size:28px;line-height:28px;color:#cdcad4;transform:scaleX(0.9700);">Francesco</div>
<div class="t" style="left:2029.8px;top:787.0px;font-size:28px;line-height:28px;color:#cdcad4;transform:scaleX(0.9700);">302</div>
<div class="t" style="left:2430.7px;top:787.0px;font-size:28px;line-height:28px;color:#cdcad4;">1</div>
<div class="a" style="left:20px;top:890.0px;width:2438px;height:2px;background:#76717f"></div>
<div class="t" style="left:29.8px;top:847.0px;font-size:28px;line-height:28px;color:#cdcad4;transform:scaleX(0.9700);">361 New Run chester, Sa...</div>
<div class="t" style="left:429.8px;top:847.0px;font-size:28px;line-height:28px;color:#cdcad4;transform:scaleX(0.9700);">Womanknit</div>
<div class="t" style="left:829.8px;top:847.0px;font-size:28px;line-height:28px;color:#cdcad4;transform:scaleX(0.9700);">Santa Ana</div>
<div class="t" style="left:1229.8px;top:847.0px;font-size:28px;line-height:28px;color:#cdcad4;transform:scaleX(0.9700);">Montserrat</div>
<div class="t" style="left:1629.8px;top:847.0px;font-size:28px;line-height:28px;color:#cdcad4;transform:scaleX(0.9700);">Flo</div>
<div class="t" style="left:2029.8px;top:847.0px;font-size:28px;line-height:28px;color:#cdcad4;transform:scaleX(0.9700);">400</div>
<div class="t" style="left:2430.7px;top:847.0px;font-size:28px;line-height:28px;color:#cdcad4;">1</div>
<div class="a" style="left:20px;top:950.0px;width:2438px;height:2px;background:#76717f"></div>
<div class="t" style="left:29.8px;top:907.0px;font-size:28px;line-height:28px;color:#cdcad4;transform:scaleX(0.9700);">19045 East Knolls burgh, ...</div>
<div class="t" style="left:429.8px;top:907.0px;font-size:28px;line-height:28px;color:#cdcad4;transform:scaleX(0.9700);">Impalawere</div>
<div class="t" style="left:829.8px;top:907.0px;font-size:28px;line-height:28px;color:#cdcad4;transform:scaleX(0.9700);">San Diego</div>
<div class="t" style="left:1229.8px;top:907.0px;font-size:28px;line-height:28px;color:#cdcad4;transform:scaleX(0.9700);">Latvia</div>
<div class="t" style="left:1629.8px;top:907.0px;font-size:28px;line-height:28px;color:#cdcad4;transform:scaleX(0.9700);">Kennith</div>
<div class="t" style="left:2029.8px;top:907.0px;font-size:28px;line-height:28px;color:#cdcad4;transform:scaleX(0.9700);">301</div>
<div class="t" style="left:2430.7px;top:907.0px;font-size:28px;line-height:28px;color:#cdcad4;">1</div>
<div class="a" style="left:20px;top:1010.0px;width:2438px;height:2px;background:#76717f"></div>
<div class="t" style="left:29.8px;top:967.0px;font-size:28px;line-height:28px;color:#cdcad4;transform:scaleX(0.9700);">30744 Lake Place port, Vi...</div>
<div class="t" style="left:429.8px;top:967.0px;font-size:28px;line-height:28px;color:#cdcad4;transform:scaleX(0.9700);">MediumSpringGreenline</div>
<div class="t" style="left:829.8px;top:967.0px;font-size:28px;line-height:28px;color:#cdcad4;transform:scaleX(0.9700);">Virginia Beach</div>
<div class="t" style="left:1229.8px;top:967.0px;font-size:28px;line-height:28px;color:#cdcad4;transform:scaleX(0.9700);">Palestine, State of</div>
<div class="t" style="left:1629.8px;top:967.0px;font-size:28px;line-height:28px;color:#cdcad4;transform:scaleX(0.9700);">Lucious</div>
<div class="t" style="left:2029.8px;top:967.0px;font-size:28px;line-height:28px;color:#cdcad4;transform:scaleX(0.9700);">302</div>
<div class="t" style="left:2430.7px;top:967.0px;font-size:28px;line-height:28px;color:#cdcad4;">1</div>
<div class="a" style="left:20px;top:1070.0px;width:2438px;height:2px;background:#76717f"></div>
<div class="t" style="left:29.8px;top:1027.0px;font-size:28px;line-height:28px;color:#cdcad4;transform:scaleX(0.9700);">35040 Hill town, Columbu...</div>
<div class="t" style="left:429.8px;top:1027.0px;font-size:28px;line-height:28px;color:#cdcad4;transform:scaleX(0.9700);">MediumSeaGreenclevern...</div>
<div class="t" style="left:829.8px;top:1027.0px;font-size:28px;line-height:28px;color:#cdcad4;transform:scaleX(0.9700);">Columbus</div>
<div class="t" style="left:1229.8px;top:1027.0px;font-size:28px;line-height:28px;color:#cdcad4;transform:scaleX(0.9700);">Spain</div>
<div class="t" style="left:1629.8px;top:1027.0px;font-size:28px;line-height:28px;color:#cdcad4;transform:scaleX(0.9700);">Tatum</div>
<div class="t" style="left:2029.8px;top:1027.0px;font-size:28px;line-height:28px;color:#cdcad4;transform:scaleX(0.9700);">404</div>
<div class="t" style="left:2430.7px;top:1027.0px;font-size:28px;line-height:28px;color:#cdcad4;">1</div>
<div class="a" style="left:20px;top:1130.0px;width:2438px;height:2px;background:#76717f"></div>
<div class="t" style="left:29.8px;top:1087.0px;font-size:28px;line-height:28px;color:#cdcad4;transform:scaleX(0.9700);">54125 Expressway port, L...</div>
<div class="t" style="left:429.8px;top:1087.0px;font-size:28px;line-height:28px;color:#cdcad4;transform:scaleX(0.9700);">Harmwill</div>
<div class="t" style="left:829.8px;top:1087.0px;font-size:28px;line-height:28px;color:#cdcad4;transform:scaleX(0.9700);">Laredo</div>
<div class="t" style="left:1229.8px;top:1087.0px;font-size:28px;line-height:28px;color:#cdcad4;transform:scaleX(0.9700);">Kyrgyzstan</div>
<div class="t" style="left:1629.8px;top:1087.0px;font-size:28px;line-height:28px;color:#cdcad4;transform:scaleX(0.9700);">Cordelia</div>
<div class="t" style="left:2029.8px;top:1087.0px;font-size:28px;line-height:28px;color:#cdcad4;transform:scaleX(0.9700);">500</div>
<div class="t" style="left:2430.7px;top:1087.0px;font-size:28px;line-height:28px;color:#cdcad4;">1</div>
<div class="a" style="left:20px;top:1190.0px;width:2438px;height:2px;background:#76717f"></div>
<div class="t" style="left:29.8px;top:1147.0px;font-size:28px;line-height:28px;color:#cdcad4;transform:scaleX(0.9700);">5204 New Fields furt, Alb...</div>
<div class="t" style="left:429.8px;top:1147.0px;font-size:28px;line-height:28px;color:#cdcad4;transform:scaleX(0.9700);">OldLaceclass</div>
<div class="t" style="left:829.8px;top:1147.0px;font-size:28px;line-height:28px;color:#cdcad4;transform:scaleX(0.9700);">Albuquerque</div>
<div class="t" style="left:1229.8px;top:1147.0px;font-size:28px;line-height:28px;color:#cdcad4;transform:scaleX(0.9700);">Italy</div>
<div class="t" style="left:1629.8px;top:1147.0px;font-size:28px;line-height:28px;color:#cdcad4;transform:scaleX(0.9700);">Jonathon</div>
<div class="t" style="left:2029.8px;top:1147.0px;font-size:28px;line-height:28px;color:#cdcad4;transform:scaleX(0.9700);">404</div>
<div class="t" style="left:2430.7px;top:1147.0px;font-size:28px;line-height:28px;color:#cdcad4;">1</div>
<div class="a" style="left:20px;top:1250.0px;width:2438px;height:2px;background:#76717f"></div>
<div class="t" style="left:29.8px;top:1207.0px;font-size:28px;line-height:28px;color:#cdcad4;transform:scaleX(0.9700);">5495 Point furt, Sacrame...</div>
<div class="t" style="left:429.8px;top:1207.0px;font-size:28px;line-height:28px;color:#cdcad4;transform:scaleX(0.9700);">MediumPurpleassistance</div>
<div class="t" style="left:829.8px;top:1207.0px;font-size:28px;line-height:28px;color:#cdcad4;transform:scaleX(0.9700);">Sacramento</div>
<div class="t" style="left:1229.8px;top:1207.0px;font-size:28px;line-height:28px;color:#cdcad4;transform:scaleX(0.9700);">Senegal</div>
<div class="t" style="left:1629.8px;top:1207.0px;font-size:28px;line-height:28px;color:#cdcad4;transform:scaleX(0.9700);">Josephine</div>
<div class="t" style="left:2029.8px;top:1207.0px;font-size:28px;line-height:28px;color:#cdcad4;transform:scaleX(0.9700);">500</div>
<div class="t" style="left:2430.7px;top:1207.0px;font-size:28px;line-height:28px;color:#cdcad4;">1</div>
</div>
<div class="t " style="left:2648.1px;top:1766.8px;font-size:22px;line-height:22px;color:#6f6a7b;transform:scaleX(0.9510);">2023 © SigLens</div>
</div></body></html>
